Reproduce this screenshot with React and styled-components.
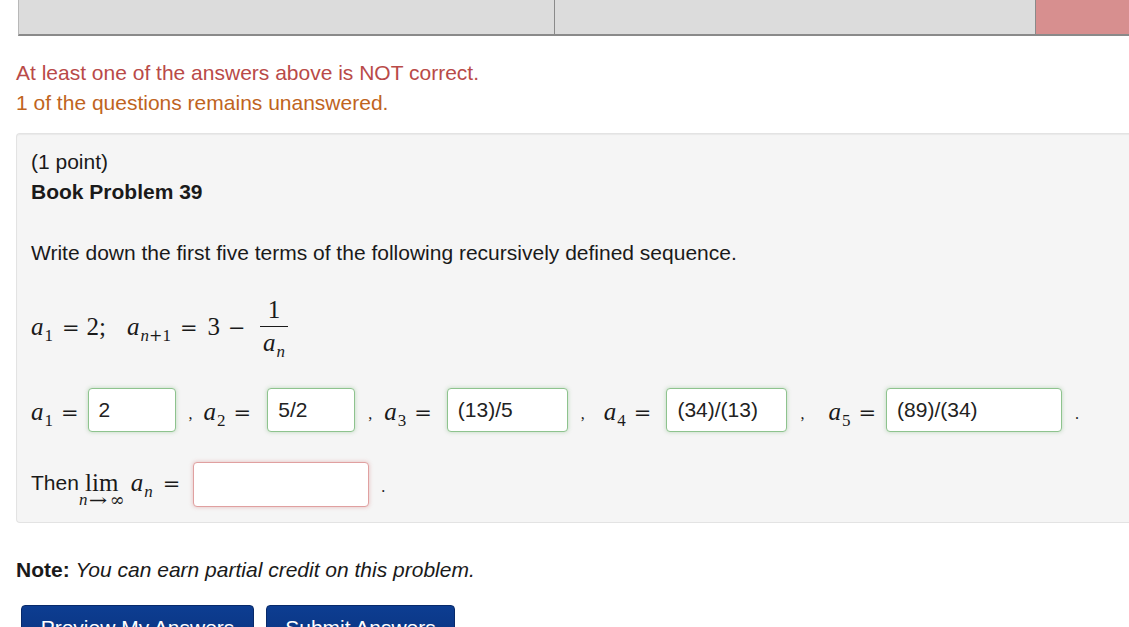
import React from "react";
import styled, { createGlobalStyle } from "styled-components";

const Global = createGlobalStyle`
  html, body { margin: 0; padding: 0; background: #fff; }
  body { font-family: "Liberation Sans", Arial, sans-serif; color: #1a1a1a; overflow: hidden; }
`;

const Page = styled.div`
  width: 1129px;
  height: 627px;
  overflow: hidden;
  padding-left: 16px;
  box-sizing: border-box;
`;

const TopTable = styled.div`
  display: grid;
  grid-template-columns: 536px 481px 200px;
  margin-left: 2px;
  height: 36px;
  border-left: 1px solid #b8b8b8;
  border-bottom: 2px solid #8a8a8a;
  box-sizing: border-box;
  width: 1220px;
`;

const TopCell = styled.div`
  background: ${(p) => (p.$bad ? "#d78f8f" : "#dcdcdc")};
  border-right: ${(p) => (p.$bad ? "none" : "1px solid #8a8a8a")};
  box-shadow: ${(p) => (p.$bad ? "none" : "1px 0 0 #fff")};
`;

const Messages = styled.div`
  margin-top: 22px;
  display: flex;
  flex-direction: column;
  font-size: 21px;
  line-height: 30px;
`;

const Msg = styled.div`
  color: ${(p) => p.$color};
`;

const ProblemBox = styled.div`
  margin-top: 15px;
  width: 1130px;
  box-sizing: border-box;
  background: #f5f5f5;
  border: 1px solid #e3e3e3;
  border-right: none;
  border-radius: 4px 0 0 4px;
  box-shadow: inset 0 1px 1px rgba(0, 0, 0, 0.05);
  padding: 13px 0 15px 14px;
  font-size: 21px;
  line-height: 30px;
`;

const Points = styled.div``;

const Title = styled.div`
  font-weight: bold;
`;

const Para = styled.div`
  margin-top: 31px;
`;

const MathLine = styled.div`
  display: flex;
  align-items: center;
  margin-top: 19px;
  height: 80px;
  font-family: "Liberation Serif", "Times New Roman", serif;
  font-size: 25px;
  line-height: 30px;
`;

const Expr = styled.span`
  display: inline-block;
  white-space: nowrap;
  padding-top: ${(p) => p.$pt ?? 0}px;
  margin-left: ${(p) => p.$ml ?? 0}px;
  font-family: "Liberation Serif", "Times New Roman", serif;
  font-size: 25px;
  line-height: 30px;
`;

const V = styled.span`
  font-style: italic;
  font-family: "Liberation Serif", "Times New Roman", serif;
  margin-left: ${(p) => p.$ml ?? 0}px;
`;

const Sub = styled.span`
  font-style: normal;
  font-size: 17px;
  vertical-align: -6px;
  line-height: 0;
  margin-left: 1px;
  font-family: "Liberation Serif", "Times New Roman", serif;
`;

const SubOp = styled.span`
  font-family: "DejaVu Serif", "Liberation Serif", serif;
  font-size: 16px;
`;

const Op = styled.span`
  margin: 0 ${(p) => p.$r ?? 6}px 0 ${(p) => p.$l ?? 8}px;
  font-family: "DejaVu Serif", "Liberation Serif", serif;
  font-size: 21px;
`;

const Frac = styled.span`
  display: inline-flex;
  flex-direction: column;
  align-items: center;
  margin-left: 9px;
`;

const Num = styled.span`
  padding: 0 8px 3px;
  border-bottom: 1.5px solid #1a1a1a;
  line-height: 26px;
`;

const Den = styled.span`
  line-height: 28px;
  padding-top: 2px;
`;

const AnswerRow = styled.div`
  display: flex;
  align-items: center;
  margin-top: 21px;
  height: 44px;
`;

const Comma = styled.span`
  font-family: "Liberation Serif", "Times New Roman", serif;
  font-size: 16px;
  margin-left: 13px;
  padding-top: 8px;
`;

const Input = styled.div`
  width: ${(p) => p.$w}px;
  height: ${(p) => p.$h ?? 44}px;
  flex: none;
  box-sizing: border-box;
  margin-left: ${(p) => p.$ml ?? 8}px;
  background: #fff;
  border: 1px solid ${(p) => (p.$bad ? "#e0a0a0" : "#8ec38e")};
  border-radius: 4px;
  box-shadow: 0 0 4px ${(p) => (p.$bad ? "rgba(200,80,80,0.35)" : "rgba(80,160,80,0.35)")};
  font-family: "Liberation Sans", Arial, sans-serif;
  font-size: 21px;
  color: #222;
  display: flex;
  align-items: center;
  padding-left: 10px;
`;

const LimRow = styled.div`
  display: flex;
  align-items: flex-start;
  margin-top: 30px;
  font-size: 21px;
  line-height: 30px;
`;

const Then = styled.span`
  margin-top: 6px;
`;

const Lim = styled.span`
  display: inline-flex;
  flex-direction: column;
  align-items: center;
  margin-left: 0px;
  margin-top: 9px;
  font-family: "Liberation Serif", "Times New Roman", serif;
  font-size: 25px;
  line-height: 24px;
`;

const LimUnder = styled.span`
  display: inline-flex;
  align-items: center;
  font-size: 17px;
  line-height: 10px;
  height: 10px;
`;

const Arrow = styled.span`
  font-family: "DejaVu Serif", "Liberation Serif", serif;
  font-size: 17px;
  display: inline-block;
  transform: scaleX(1.3);
  margin: 0 4px;
`;

const Inf = styled.span`
  font-family: "DejaVu Serif", "Liberation Serif", serif;
  font-size: 18px;
`;

const Period = styled.span`
  font-family: "Liberation Serif", "Times New Roman", serif;
  margin-left: 12px;
  font-size: 16px;
  margin-top: 10px;
`;

const Note = styled.div`
  margin-top: 32px;
  font-size: 21px;
  line-height: 30px;
  b { font-weight: bold; }
  i { font-style: italic; }
`;

const Buttons = styled.div`
  display: flex;
  gap: 12px;
  margin-top: 20px;
  margin-left: 5px;
`;

const Button = styled.button`
  height: 44px;
  width: ${(p) => p.$w}px;
  flex: none;
  background: linear-gradient(#0d3d91, #0a3380);
  color: #fff;
  border: 1px solid #082a6a;
  border-radius: 4px;
  font-family: "Liberation Sans", Arial, sans-serif;
  font-size: 21px;
  padding: 7px 0 0;
  display: flex;
  justify-content: center;
  align-items: flex-start;
  line-height: 30px;
`;

const terms = [
  { n: "1", v: "2", w: 88, tml: 0, iml: 3 },
  { n: "2", v: "5/2", w: 88, tml: 11, iml: 10 },
  { n: "3", v: "(13)/5", w: 121, tml: 12, iml: 9 },
  { n: "4", v: "(34)/(13)", w: 121, tml: 19, iml: 9 },
  { n: "5", v: "(89)/(34)", w: 176, tml: 24, iml: 4 },
];

export default function App() {
  return (
    <Page>
      <Global />
      <TopTable>
        <TopCell />
        <TopCell />
        <TopCell $bad />
      </TopTable>
      <Messages>
        <Msg $color="#b94a48">At least one of the answers above is NOT correct.</Msg>
        <Msg $color="#c0641e">1 of the questions remains unanswered.</Msg>
      </Messages>
      <ProblemBox>
        <Points>(1 point)</Points>
        <Title>Book Problem 39</Title>
        <Para>Write down the first five terms of the following recursively defined sequence.</Para>
        <MathLine>
          <Expr>
            <V>a</V><Sub>1</Sub>
            <Op $l={9} $r={7}>=</Op>
            <span>2;</span>
            <V $ml={21}>a</V><Sub><V>n</V><SubOp>+</SubOp>1</Sub>
            <Op $l={9} $r={10}>=</Op>
            <span>3</span>
            <Op $l={8} $r={5}>−</Op>
          </Expr>
          <Frac>
            <Num>1</Num>
            <Den><V>a</V><Sub><V>n</V></Sub></Den>
          </Frac>
        </MathLine>
        <AnswerRow>
          {terms.map((t, i) => (
            <React.Fragment key={t.n}>
              {i > 0 && <Comma>,</Comma>}
              <Expr $ml={t.tml} $pt={4}>
                <V>a</V><Sub>{t.n}</Sub><Op>=</Op>
              </Expr>
              <Input $w={t.w} $ml={t.iml}>{t.v}</Input>
            </React.Fragment>
          ))}
          <Comma>.</Comma>
        </AnswerRow>
        <LimRow>
          <Then>Then</Then>
          <Lim>
            <span>lim</span>
            <LimUnder>
              <V>n</V>
              <Arrow>→</Arrow>
              <Inf>∞</Inf>
            </LimUnder>
          </Lim>
          <Expr $ml={6} $pt={6}>
            <V>a</V><Sub><V>n</V></Sub>
            <Op $l={10} $r={9}>=</Op>
          </Expr>
          <Input $w={176} $h={45} $ml={4} $bad />
          <Period>.</Period>
        </LimRow>
      </ProblemBox>
      <Note>
        <b>Note:</b> <i>You can earn partial credit on this problem.</i>
      </Note>
      <Buttons>
        <Button $w={233}>Preview My Answers</Button>
        <Button $w={189}>Submit Answers</Button>
      </Buttons>
    </Page>
  );
}
